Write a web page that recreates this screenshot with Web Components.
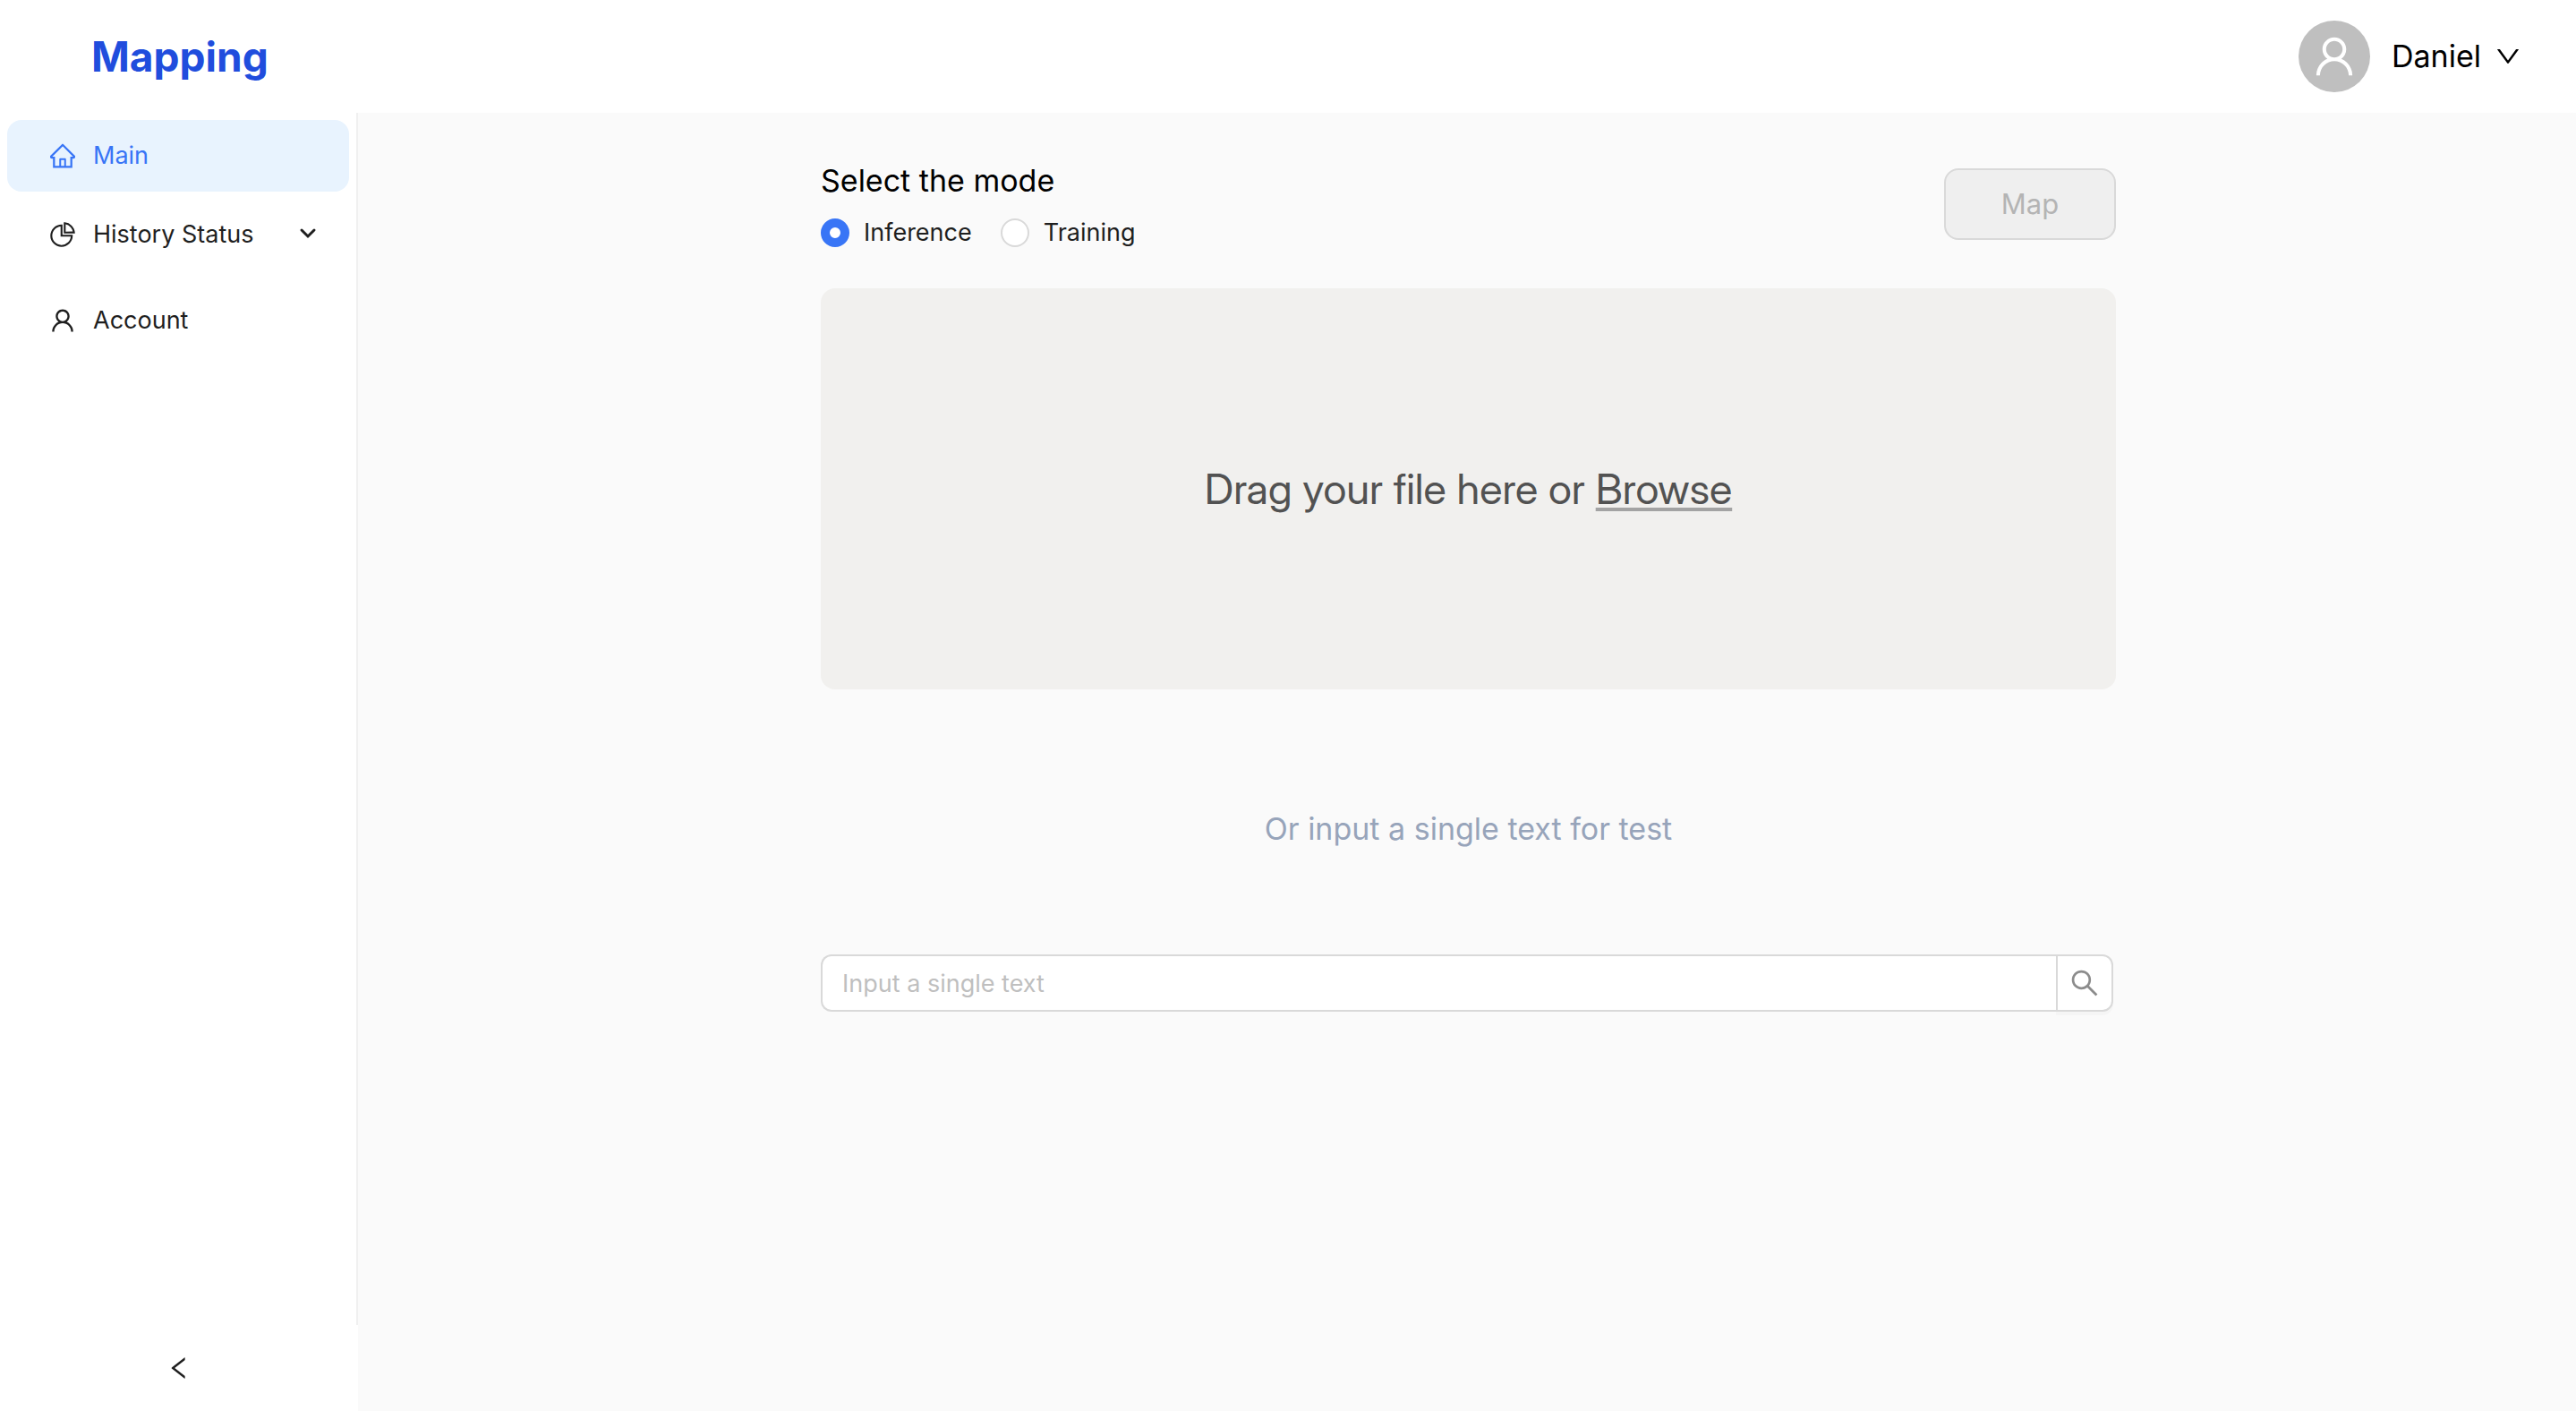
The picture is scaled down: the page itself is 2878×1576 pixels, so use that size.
<!DOCTYPE html>
<html lang="en">
<head>
<meta charset="utf-8">
<title>Mapping</title>
<style>
  html, body { height: 100%; margin: 0; }
  body { font-family: Inter, "Liberation Sans", sans-serif; font-size: 27px; line-height: 44px; color: #1f1f1f; background: #fff; }
</style>
</head>
<body>
<mapping-app></mapping-app>
<script>
const ICONS = {
  home: 'M946.5 505L560.1 118.8l-25.9-25.9a31.5 31.5 0 00-44.4 0L77.5 505a63.9 63.9 0 00-18.8 46c.4 35.2 29.7 63.3 64.9 63.3h42.5V940h691.8V614.3h43.4c17.1 0 33.2-6.7 45.3-18.8a63.6 63.6 0 0018.7-45.3c0-17-6.7-33.1-18.8-45.2zM568 868H456V664h112v204zm217.9-325.7V868H632V640c0-22.1-17.9-40-40-40H432c-22.1 0-40 17.9-40 40v228H238.1V542.3h-96l370-369.7 23.1 23.1L882 542.3h-96.1z',
  pie: 'M864 518H506V160c0-4.4-3.6-8-8-8h-26a398.46 398.46 0 00-282.8 117.1 398.19 398.19 0 00-85.7 127.1A397.61 397.61 0 0072 552a398.46 398.46 0 00117.1 282.8c36.7 36.7 79.5 65.6 127.1 85.7A397.61 397.61 0 00472 952a398.46 398.46 0 00282.8-117.1c36.7-36.7 65.6-79.5 85.7-127.1A397.61 397.61 0 00872 552v-26c0-4.4-3.6-8-8-8zM705.7 787.8A331.59 331.59 0 01470.4 884c-88.1-.4-170.9-34.9-233.2-97.2C174.5 724.1 140 640.7 140 552c0-88.7 34.5-172.1 97.2-234.8 54.6-54.6 124.9-87.9 200.8-95.5V586h364.3c-7.7 76.3-41.3 147-96.6 201.8zM952 462.4l-2.6-28.2c-8.5-92.1-49.4-179-115.2-244.6A399.4 399.4 0 00589 74.6L560.7 72c-4.7-.4-8.7 3.2-8.7 7.9V464c0 4.4 3.6 8 8 8l384-1c4.7 0 8.4-4 8-8.6zm-332.2-58.2V147.6a332.24 332.24 0 01166.4 89.8c45.7 45.6 77 103.6 90 166.1l-256.4.7z',
  user: 'M858.5 763.6a374 374 0 00-80.6-119.5 375.63 375.63 0 00-119.5-80.6c-.4-.2-.8-.3-1.2-.5C719.5 518 760 444.7 760 362c0-137-111-248-248-248S264 225 264 362c0 82.7 40.5 156 102.8 201.1-.4.2-.8.3-1.2.5-44.8 18.9-85 46-119.5 80.6a375.63 375.63 0 00-80.6 119.5A371.7 371.7 0 00136 901.8a8 8 0 008 8.2h60c4.4 0 7.9-3.5 8-7.8 2-77.2 33-149.5 87.8-204.3 56.7-56.7 132-87.9 212.2-87.9s155.5 31.2 212.2 87.9C779 752.7 810 825 812 902.2c.1 4.4 3.6 7.8 8 7.8h60a8 8 0 008-8.2c-1-47.8-10.9-94.3-29.5-138.2zM512 534c-45.9 0-89.1-17.9-121.6-50.4S340 407.9 340 362c0-45.9 17.9-89.1 50.4-121.6S466.1 190 512 190s89.1 17.9 121.6 50.4S684 316.1 684 362c0 45.9-17.9 89.1-50.4 121.6S557.9 534 512 534z',
  down: 'M884 256h-75c-5.1 0-9.9 2.5-12.9 6.6L512 654.2 227.9 262.6c-3-4.1-7.8-6.6-12.9-6.6h-75c-6.5 0-10.3 7.4-6.5 12.7l352.6 486.1c12.8 17.6 39 17.6 51.7 0l352.6-486.1c3.9-5.3.1-12.7-6.4-12.7z',
  left: 'M724 218.3V141c0-6.7-7.7-10.4-12.9-6.3L260.3 486.8a31.86 31.86 0 000 50.3l450.8 352.1c5.3 4.1 12.9.4 12.9-6.3v-77.3c0-4.9-2.3-9.6-6.1-12.6l-360-281 360-281.1c3.8-3 6.1-7.7 6.1-12.6z',
  search: 'M909.6 854.5L649.9 594.8C690.2 542.7 712 479 712 412c0-80.2-31.3-155.4-87.9-212.1-56.6-56.7-132-87.9-212.1-87.9s-155.5 31.3-212.1 87.9C143.2 256.5 112 331.8 112 412c0 80.1 31.3 155.5 87.9 212.1C256.5 680.8 331.8 712 412 712c67 0 130.6-21.8 182.7-62l259.7 259.6a8.2 8.2 0 0011.6 0l43.6-43.5a8.2 8.2 0 000-11.6zM570.4 570.4C528 612.7 471.8 636 412 636s-116-23.3-158.4-65.6C211.3 528 188 471.8 188 412s23.3-116.1 65.6-158.4C296 211.3 352.2 188 412 188s116.1 23.2 158.4 65.6S636 352.2 636 412s-23.3 116.1-65.6 158.4z'
};

const define = (name, render) => customElements.define(name, class extends HTMLElement {
  connectedCallback() {
    if (this.shadowRoot) return;
    this.attachShadow({ mode: 'open' }).innerHTML = '<style>*{box-sizing:border-box}a{color:inherit;text-decoration:none}button,input{font:inherit;margin:0}</style>' + render(this);
  }
});

define('app-icon', el => `
  <style>
    :host { display: block; flex: none; width: var(--icon-size, 28px); height: var(--icon-size, 28px); }
    svg { display: block; width: 100%; height: 100%; fill: currentColor; }
  </style>
  <svg viewBox="64 64 896 896" aria-hidden="true"><path d="${ICONS[el.getAttribute('name')]}"/></svg>`);

define('app-header', () => `
  <style>
    :host { display: block; background: #fff; }
    header { display: flex; align-items: center; justify-content: space-between; height: 126px; padding: 0 62px 0 102px; }
    h1 { margin: 0; font-size: 46px; line-height: 60px; font-weight: 700; color: #204ddd; }
    button { display: flex; align-items: center; padding: 0; border: 0; background: none; color: #000; font-size: 34px; line-height: 56px; }
    .avatar { display: grid; place-items: center; width: 80px; height: 80px; margin-right: 24px; border-radius: 50%; background: #bfbfbf; color: #fff; --icon-size: 48px; }
    .name { margin-right: 16px; }
  </style>
  <header>
    <h1>Mapping</h1>
    <button type="button" aria-haspopup="menu">
      <span class="avatar"><app-icon name="user"></app-icon></span>
      <span class="name">Daniel</span>
      <app-icon name="down"></app-icon>
    </button>
  </header>`);

define('menu-item', el => `
  <style>
    :host { display: block; }
    a { display: flex; align-items: center; gap: 20px; height: 80px; padding: 0 36px 0 48px; border-radius: 16px; color: #1f1f1f; }
    :host([active]) a { background: #e8f3fe; color: #3875f6; }
    .label { flex: 1; }
    svg { width: 20px; height: 20px; fill: none; stroke: currentColor; stroke-width: 3; stroke-linecap: round; }
  </style>
  <a href="#">
    <app-icon name="${el.getAttribute('icon')}"></app-icon>
    <span class="label"><slot></slot></span>
    ${el.hasAttribute('expandable') ? '<svg viewBox="0 0 20 20" aria-hidden="true"><path d="M3 5l7 7 7-7"/></svg>' : ''}
  </a>`);

define('side-bar', () => `
  <style>
    :host { display: flex; flex-direction: column; width: 400px; background: #fff; }
    nav { flex: 1; display: flex; flex-direction: column; gap: 8px; padding: 8px; border-right: 2px solid #f0f0f0; }
    menu-item[expandable] { margin-bottom: 8px; }
    button { display: grid; place-items: center; height: 96px; padding: 0; border: 0; background: #fff; color: #1f1f1f; }
  </style>
  <nav aria-label="Main menu">
    <menu-item icon="home" active>Main</menu-item>
    <menu-item icon="pie" expandable>History Status</menu-item>
    <menu-item icon="user">Account</menu-item>
  </nav>
  <button type="button" aria-label="Collapse sidebar"><app-icon name="left"></app-icon></button>`);

define('mode-picker', () => `
  <style>
    :host { display: block; }
    fieldset { margin: 0; padding: 0; border: 0; }
    legend { padding: 0; font-size: 34px; line-height: 56px; color: #000; }
    .options { display: flex; gap: 32px; padding-top: 8px; }
    label { display: flex; align-items: center; gap: 16px; }
    input { appearance: none; width: 32px; height: 32px; border: 2px solid #d9d9d9; border-radius: 50%; background: #fff; }
    input:checked { border: 10px solid #3875f6; }
  </style>
  <fieldset>
    <legend>Select the mode</legend>
    <div class="options">
      <label><input type="radio" name="mode" value="inference" checked>Inference</label>
      <label><input type="radio" name="mode" value="training">Training</label>
    </div>
  </fieldset>`);

define('drop-zone', () => `
  <style>
    :host { display: grid; place-items: center; height: 448px; border-radius: 16px; background: #f1f0ee; color: #525252; }
    p { margin: 0; font-family: "Inter Display", Inter, "Liberation Sans", sans-serif; font-size: 47px; line-height: 72px; }
    a { text-decoration: underline; text-decoration-color: #a3a3a3; text-decoration-thickness: 4px; text-underline-offset: 4px; text-decoration-skip-ink: none; }
  </style>
  <p>Drag your file here or <a href="#">Browse</a></p>`);

define('text-search', () => `
  <style>
    :host { display: block; }
    form { display: flex; margin-right: 3px; }
    input { flex: 1; min-width: 0; height: 64px; padding: 0 22px; border: 2px solid #d9d9d9; border-right: 0; border-radius: 12px 0 0 12px; background: #fff; outline: 0; }
    input::placeholder { color: #bfbfbf; opacity: 1; }
    button { display: grid; place-items: center; width: 64px; height: 64px; padding: 0; border: 2px solid #d9d9d9; border-radius: 0 12px 12px 0; background: #fff; color: #8c8c8c; box-shadow: 0 4px 0 rgba(0, 0, 0, .02); --icon-size: 32px; }
  </style>
  <form>
    <input type="text" placeholder="Input a single text" aria-label="Input a single text">
    <button type="button" aria-label="Search"><app-icon name="search"></app-icon></button>
  </form>`);

define('mapping-page', () => `
  <style>
    :host { display: grid; grid-template-columns: 517fr 1447fr 514fr; align-content: start; background: #fafafa; }
    main { grid-column: 2; padding-top: 48px; }
    .top { display: flex; justify-content: space-between; align-items: flex-start; margin-bottom: 40px; }
    .map { width: 192px; height: 80px; margin-top: 14px; border: 2px solid #d9d9d9; border-radius: 16px; background: #efefef; color: #b4b4b4; font-size: 31px; }
    .hint { margin: 128px 0 112px; text-align: center; font-size: 34px; line-height: 56px; color: #97a4ba; }
  </style>
  <main>
    <div class="top">
      <mode-picker></mode-picker>
      <button class="map" type="button" disabled>Map</button>
    </div>
    <drop-zone></drop-zone>
    <p class="hint">Or input a single text for test</p>
    <text-search></text-search>
  </main>`);

define('mapping-app', () => `
  <style>
    :host { display: flex; flex-direction: column; min-height: 100vh; }
    .body { flex: 1; display: flex; }
    side-bar { flex: none; }
    mapping-page { flex: 1; }
  </style>
  <app-header></app-header>
  <div class="body">
    <side-bar></side-bar>
    <mapping-page></mapping-page>
  </div>`);
</script>
</body>
</html>
